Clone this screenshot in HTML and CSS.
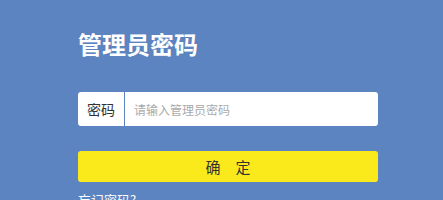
FILE: index.html
```html
<!DOCTYPE html>
<html lang="zh-CN">
<head>
    <meta charset="UTF-8">
    <title>管理员密码</title>
    <link rel="stylesheet" href="styles.css">
</head>
<body>
    <div id="login-box">
        <h2>管理员密码</h2>
        <div class="pwd-row">
            <label for="pwd">密码</label>
            <input type="password" id="pwd" placeholder="请输入管理员密码">
        </div>
        <button type="button">确&emsp;定</button>
        <a class="forget" href="#">忘记密码?</a>
    </div>
</body>
</html>
```

FILE: styles.css
```css
body {
    margin: 0;
    background-color: #5b84c0;
    font-family: "Noto Sans CJK SC", "Liberation Sans", sans-serif;
}
#login-box {
    width: 300px;
    margin-left: 78px;
    padding-top: 26px;
}
h2 {
    margin: 0 0 30px 0;
    font-size: 24px;
    line-height: 36px;
    font-weight: bold;
    color: #fff;
}
.pwd-row {
    display: flex;
    height: 34px;
    background: #fff;
    border-radius: 3px;
}
.pwd-row label {
    width: 46px;
    line-height: 34px;
    text-align: center;
    font-size: 14px;
    color: #333;
    border-right: 1px solid #5b84c0;
}
.pwd-row input {
    flex: 1;
    border: none;
    outline: none;
    background: transparent;
    padding: 0 9px;
    font-size: 12px;
    font-family: inherit;
}
.pwd-row input::placeholder {
    color: #aaa;
}
button {
    display: block;
    width: 100%;
    height: 31px;
    margin-top: 25px;
    border: none;
    border-radius: 3px;
    background-color: #fbea1b;
    color: #333;
    font-size: 15px;
    font-family: inherit;
    cursor: pointer;
}
.forget {
    display: block;
    margin-top: 8px;
    font-size: 13px;
    color: #fff;
    text-decoration: none;
}
```
